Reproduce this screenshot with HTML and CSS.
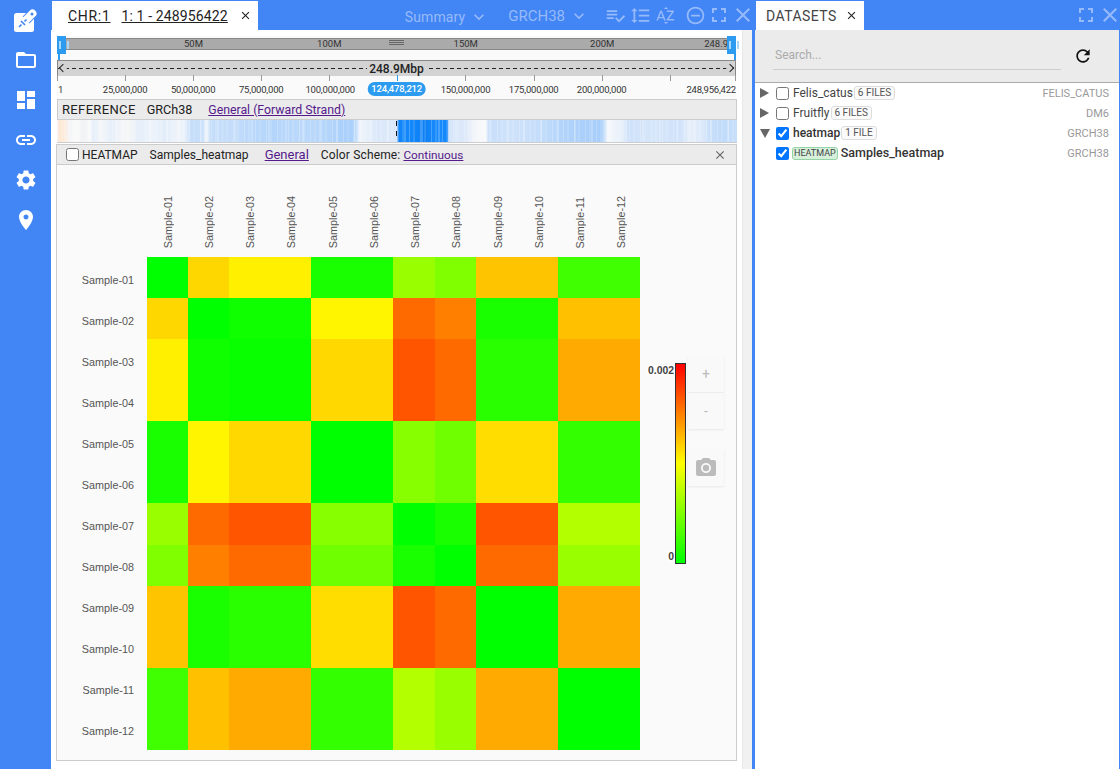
FILE: index.html
```html
<!DOCTYPE html>
<html>
<head>
    <title>Genome Browser</title>
    <link rel="stylesheet" href="styles.css">
</head>
<body>
    <svg class="sprite" xmlns="http://www.w3.org/2000/svg">
        <symbol id="i-folder" viewBox="0 0 24 24"><path d="M20 6h-8l-2-2H4c-1.1 0-2 .9-2 2v12c0 1.1.9 2 2 2h16c1.1 0 2-.9 2-2V8c0-1.1-.9-2-2-2zm0 12H4V8h16v10z"/></symbol>
        <symbol id="i-dashboard" viewBox="0 0 24 24"><path d="M3 13h8V3H3v10zm0 8h8v-6H3v6zm10 0h8V11h-8v10zm0-18v6h8V3h-8z"/></symbol>
        <symbol id="i-link" viewBox="0 0 24 24"><path d="M3.9 12c0-1.71 1.39-3.1 3.1-3.1h4V7H7c-2.76 0-5 2.24-5 5s2.24 5 5 5h4v-1.9H7c-1.71 0-3.1-1.39-3.1-3.1zM8 13h8v-2H8v2zm9-6h-4v1.9h4c1.71 0 3.1 1.39 3.1 3.1s-1.39 3.1-3.1 3.1h-4V17h4c2.76 0 5-2.24 5-5s-2.24-5-5-5z"/></symbol>
        <symbol id="i-gear" viewBox="0 0 24 24"><path d="M19.14 12.94c.04-.3.06-.61.06-.94 0-.32-.02-.64-.07-.94l2.03-1.58c.18-.14.23-.41.12-.61l-1.92-3.32c-.12-.22-.37-.29-.59-.22l-2.39.96c-.5-.38-1.03-.7-1.62-.94l-.36-2.54c-.04-.24-.24-.41-.48-.41h-3.84c-.24 0-.43.17-.47.41l-.36 2.54c-.59.24-1.13.57-1.62.94l-2.39-.96c-.22-.08-.47 0-.59.22L2.74 8.87c-.12.21-.08.47.12.61l2.03 1.58c-.05.3-.09.63-.09.94s.02.64.07.94l-2.03 1.58c-.18.14-.23.41-.12.61l1.92 3.32c.12.22.37.29.59.22l2.39-.96c.5.38 1.03.7 1.62.94l.36 2.54c.05.24.24.41.48.41h3.84c.24 0 .44-.17.47-.41l.36-2.54c.59-.24 1.13-.56 1.62-.94l2.39.96c.22.08.47 0 .59-.22l1.92-3.32c.12-.22.07-.47-.12-.61l-2.01-1.58zM12 15.6c-1.98 0-3.6-1.62-3.6-3.6s1.62-3.6 3.6-3.6 3.6 1.62 3.6 3.6-1.62 3.6-3.6 3.6z"/></symbol>
        <symbol id="i-pin" viewBox="0 0 24 24"><path d="M12 2C8.13 2 5 5.13 5 9c0 5.25 7 13 7 13s7-7.75 7-13c0-3.87-3.13-7-7-7zm0 9.5c-1.38 0-2.5-1.12-2.5-2.5s1.12-2.5 2.5-2.5 2.5 1.12 2.5 2.5-1.12 2.5-2.5 2.5z"/></symbol>
        <symbol id="i-chevron" viewBox="0 0 24 24"><path d="M7.41 8.59L12 13.17l4.59-4.58L18 10l-6 6-6-6 1.41-1.41z"/></symbol>
        <symbol id="i-checklist" viewBox="0 0 24 24"><path d="M14 10H2v2h12v-2zm0-4H2v2h12V6zM2 16h8v-2H2v2zm19.5-4.5L23 13l-6.99 7-4.51-4.5L13 14l3.01 3 5.49-5.5z"/></symbol>
        <symbol id="i-spacing" viewBox="0 0 24 24"><path d="M6 7h2.5L5 3.5 1.5 7H4v10H1.5L5 20.5 8.5 17H6V7zm4-2v2h12V5H10zm0 14h12v-2H10v2zm0-6h12v-2H10v2z"/></symbol>
        <symbol id="i-alpha" viewBox="0 0 24 24"><path d="M14.94 4.66h-4.72l2.36-2.36zm-4.69 14.71h4.66l-2.33 2.33zM6.1 6.27L1.6 17.73h1.84l.92-2.45h5.11l.92 2.45h1.84L7.74 6.27H6.1zm-1.13 7.37l1.94-5.18 1.94 5.18H4.97zm10.76 2.5h6.12v1.59h-8.53v-1.29l5.92-8.56h-5.88v-1.6h8.3v1.26l-5.93 8.6z"/></symbol>
        <symbol id="i-minus" viewBox="0 0 24 24"><path d="M7 11v2h10v-2H7zm5-9C6.48 2 2 6.48 2 12s4.48 10 10 10 10-4.48 10-10S17.52 2 12 2zm0 18c-4.41 0-8-3.59-8-8s3.59-8 8-8 8 3.59 8 8-3.59 8-8 8z"/></symbol>
        <symbol id="i-full" viewBox="0 0 24 24"><path d="M7 14H5v5h5v-2H7v-3zm-2-4h2V7h3V5H5v5zm12 7h-3v2h5v-5h-2v3zM14 5v2h3v3h2V5h-5z"/></symbol>
        <symbol id="i-close" viewBox="0 0 24 24"><path d="M19 6.41L17.59 5 12 10.59 6.41 5 5 6.41 10.59 12 5 17.59 6.41 19 12 13.41 17.59 19 19 17.59 13.41 12z"/></symbol>
        <symbol id="i-refresh" viewBox="0 0 24 24"><path d="M17.65 6.35C16.2 4.9 14.21 4 12 4c-4.42 0-7.99 3.58-7.99 8s3.57 8 7.99 8c3.73 0 6.84-2.55 7.73-6h-2.08c-.82 2.33-3.04 4-5.65 4-3.31 0-6-2.69-6-6s2.69-6 6-6c1.66 0 3.14.69 4.22 1.78L13 11h7V4l-2.35 2.35z"/></symbol>
        <symbol id="i-camera" viewBox="0 0 24 24"><circle cx="12" cy="12" r="3.2"/><path d="M9 2L7.17 4H4c-1.1 0-2 .9-2 2v12c0 1.1.9 2 2 2h16c1.1 0 2-.9 2-2V6c0-1.1-.9-2-2-2h-3.17L15 2H9zm3 15c-2.76 0-5-2.24-5-5s2.24-5 5-5 5 2.24 5 5-2.24 5-5 5z"/></symbol>
    </svg>

    <nav class="sidebar">
        <svg class="logo" viewBox="0 0 24 24">
            <rect x="0" y="5" width="20" height="19" rx="2.5" fill="#fff"/>
            <path d="M12 12L18 6" stroke="#4285f4" stroke-width="9.6"/>
            <path d="M11 13L18.5 5.5" stroke="#fff" stroke-width="8" stroke-linecap="round"/>
            <path d="M5 19l2.5-2.5M7 13l4 4M10.5 13.5l2-2" stroke="#4285f4" stroke-width="1.7" fill="none"/>
            <circle cx="18" cy="6" r="1.5" fill="#4285f4"/>
        </svg>
        <svg class="nav-icon"><use href="#i-folder"/></svg>
        <svg class="nav-icon"><use href="#i-dashboard"/></svg>
        <svg class="nav-icon"><use href="#i-link"/></svg>
        <svg class="nav-icon"><use href="#i-gear"/></svg>
        <svg class="nav-icon"><use href="#i-pin"/></svg>
    </nav>

    <section class="main-panel">
        <header class="tabbar">
            <div class="tab tab-view">
                <span class="tab-chr">CHR:1</span>
                <span class="tab-range">1: 1 - 248956422</span>
                <svg class="tab-close"><use href="#i-close"/></svg>
            </div>
            <div class="tools">
                <span class="tool-select tool-summary">Summary <svg class="chevron"><use href="#i-chevron"/></svg></span>
                <span class="tool-select tool-genome">GRCH38 <svg class="chevron"><use href="#i-chevron"/></svg></span>
                <svg class="tool-icon"><use href="#i-checklist"/></svg>
                <svg class="tool-icon"><use href="#i-spacing"/></svg>
                <svg class="tool-icon"><use href="#i-alpha"/></svg>
                <svg class="tool-icon tool-minus"><use href="#i-minus"/></svg>
                <svg class="tool-icon tool-full"><use href="#i-full"/></svg>
                <svg class="tool-icon tool-x"><use href="#i-close"/></svg>
            </div>
        </header>
        <div class="main-body">
            <div class="view">
                <div class="ruler">
                    <div class="overview">
                        <span class="ov-label" style="left:20.1%">50M</span>
                        <span class="ov-label" style="left:40.1%">100M</span>
                        <span class="ov-label" style="left:60.2%">150M</span>
                        <span class="ov-label" style="left:80.3%">200M</span>
                        <span class="ov-end">248.9</span>
                        <span class="grip"></span>
                    </div>
                    <span class="handle handle-left"></span>
                    <span class="handle handle-right"></span>
                    <div class="span-bar">
                        <span class="span-arrow span-arrow-left"></span>
                        <span class="span-text">248.9Mbp</span>
                        <span class="span-arrow span-arrow-right"></span>
                    </div>
                    <div class="ticks">
                        <span class="tick" style="left:0"></span>
                        <span class="tick" style="left:10.04%"></span>
                        <span class="tick" style="left:20.08%"></span>
                        <span class="tick" style="left:30.12%"></span>
                        <span class="tick" style="left:40.16%"></span>
                        <span class="tick tick-pin" style="left:50.1%"></span>
                        <span class="tick" style="left:60.25%"></span>
                        <span class="tick" style="left:70.3%"></span>
                        <span class="tick" style="left:80.33%"></span>
                        <span class="tick" style="left:90.37%"></span>
                        <span class="tick" style="left:100%"></span>
                        <span class="tick-first">1</span>
                        <span class="tick-label" style="left:10.04%">25,000,000</span>
                        <span class="tick-label" style="left:20.08%">50,000,000</span>
                        <span class="tick-label" style="left:30.12%">75,000,000</span>
                        <span class="tick-label" style="left:40.3%">100,000,000</span>
                        <span class="tick-label" style="left:60.25%">150,000,000</span>
                        <span class="tick-label" style="left:70.3%">175,000,000</span>
                        <span class="tick-label" style="left:80.33%">200,000,000</span>
                        <span class="tick-last">248,956,422</span>
                        <span class="pin-label">124,478,212</span>
                    </div>
                </div>

                <div class="track-head ref-head">
                    <span class="track-type">REFERENCE</span>
                    <span class="track-name">GRCh38</span>
                    <a class="track-link" href="#">General (Forward Strand)</a>
                </div>
                <div class="ref-track"><span class="ref-cursor"></span></div>

                <div class="heat-card">
                    <div class="track-head heat-head">
                        <input type="checkbox" class="heat-check">
                        <span class="heat-type">HEATMAP</span>
                        <span class="track-name">Samples_heatmap</span>
                        <a class="track-link heat-general" href="#">General</a>
                        <span class="scheme"><span class="scheme-label">Color Scheme:</span> <a class="track-link" href="#">Continuous</a></span>
                        <svg class="heat-close"><use href="#i-close"/></svg>
                    </div>
                    <div class="heat-plot">
                        <div class="col-labels">
                            <span>Sample-01</span><span>Sample-02</span><span>Sample-03</span><span>Sample-04</span>
                            <span>Sample-05</span><span>Sample-06</span><span>Sample-07</span><span>Sample-08</span>
                            <span>Sample-09</span><span>Sample-10</span><span>Sample-11</span><span>Sample-12</span>
                        </div>
                        <div class="row-labels">
                            <span>Sample-01</span><span>Sample-02</span><span>Sample-03</span><span>Sample-04</span>
                            <span>Sample-05</span><span>Sample-06</span><span>Sample-07</span><span>Sample-08</span>
                            <span>Sample-09</span><span>Sample-10</span><span>Sample-11</span><span>Sample-12</span>
                        </div>
                        <div class="matrix" id="matrix"></div>
                        <div class="legend">
                            <div class="color-bar">
                                <span class="bar-max">0.002</span>
                                <span class="bar-min">0</span>
                            </div>
                            <div class="heat-buttons">
                                <button class="heat-btn">+</button>
                                <button class="heat-btn">-</button>
                                <button class="heat-btn heat-camera"><svg><use href="#i-camera"/></svg></button>
                            </div>
                        </div>
                    </div>
                </div>
            </div>
            <div class="scrollbar"></div>
        </div>
    </section>

    <aside class="side-panel">
        <header class="tabbar">
            <div class="tab tab-side">
                <span class="tab-title">DATASETS</span>
                <svg class="tab-close"><use href="#i-close"/></svg>
            </div>
            <div class="tools">
                <svg class="tool-icon tool-full"><use href="#i-full"/></svg>
                <svg class="tool-icon tool-x"><use href="#i-close"/></svg>
            </div>
        </header>
        <div class="side-search">
            <input type="text" class="search-input" placeholder="Search...">
            <svg class="refresh"><use href="#i-refresh"/></svg>
        </div>
        <ul class="tree">
            <li class="tree-row">
                <span class="arrow"></span>
                <input type="checkbox">
                <span class="tree-name">Felis_catus</span>
                <span class="badge">6 FILES</span>
                <span class="genome">FELIS_CATUS</span>
            </li>
            <li class="tree-row">
                <span class="arrow"></span>
                <input type="checkbox">
                <span class="tree-name">Fruitfly</span>
                <span class="badge">6 FILES</span>
                <span class="genome">DM6</span>
            </li>
            <li class="tree-row">
                <span class="arrow arrow-open"></span>
                <input type="checkbox" checked>
                <span class="tree-name tree-active">heatmap</span>
                <span class="badge">1 FILE</span>
                <span class="genome">GRCH38</span>
            </li>
            <li class="tree-row tree-child">
                <input type="checkbox" checked>
                <span class="badge-heat">HEATMAP</span>
                <span class="tree-name tree-active tree-file">Samples_heatmap</span>
                <span class="genome">GRCH38</span>
            </li>
        </ul>
    </aside>

    <script src="heatmap.js"></script>
</body>
</html>
```

FILE: styles.css
```css
* {
    box-sizing: border-box;
}
html, body {
    height: 100%;
}
body {
    margin: 0;
    display: flex;
    overflow: hidden;
    background-color: #4285f4;
    font-family: Roboto, "Liberation Sans", sans-serif;
    font-size: 12px;
    color: #222;
}
.sprite {
    display: none;
}

/* left nav */
.sidebar {
    width: 51px;
    flex: none;
    display: flex;
    flex-direction: column;
    align-items: center;
    padding-top: 8px;
}
.logo {
    width: 24px;
    height: 24px;
    margin-bottom: 16px;
}
.nav-icon {
    width: 24px;
    height: 24px;
    margin-bottom: 16px;
    fill: #fff;
}

/* tabs */
.main-panel {
    width: 701px;
    flex: none;
    display: flex;
    flex-direction: column;
}
.tabbar {
    height: 30px;
    flex: none;
    display: flex;
    justify-content: space-between;
}
.tab {
    margin: 1px 0 0 1px;
    background-color: #fff;
    display: flex;
    align-items: center;
    font-size: 14px;
}
.tab-view {
    width: 206px;
    padding-left: 16px;
}
.tab-chr, .tab-range {
    text-decoration: underline;
}
.tab-chr {
    margin-right: 11px;
    letter-spacing: 0.7px;
}
.tab-range {
    letter-spacing: 0.13px;
}
.tab-close {
    width: 13px;
    height: 13px;
    margin-left: 11px;
    fill: #222;
}
.tab-side {
    width: 108px;
    padding-left: 10px;
    color: #444;
}
.tab-title {
    letter-spacing: 0.45px;
}
.tab-side .tab-close {
    margin-left: 8px;
}
.tools {
    display: flex;
    align-items: center;
    color: #97bafa;
    font-size: 14px;
    margin-right: -3px;
}
.tool-select {
    display: flex;
    align-items: center;
    padding-top: 3px;
}
.tool-summary {
    letter-spacing: 0.1px;
    margin-right: 19px;
}
.tool-genome {
    font-size: 15px;
    padding-top: 1px;
    margin-right: 12px;
}
.chevron {
    width: 20px;
    height: 20px;
    margin-left: 4px;
    fill: #97bafa;
}
.tool-icon {
    width: 21px;
    height: 21px;
    margin-left: 4px;
    fill: #97bafa;
}
.tool-minus {
    margin-left: 9px;
}
.tool-full {
    width: 24px;
    height: 24px;
    margin-left: 1px;
}
.tool-x {
    width: 24px;
    height: 24px;
    margin-left: 0;
}

/* main body */
.main-body {
    flex: 1;
    display: flex;
    background-color: #fff;
    overflow: hidden;
}
.view {
    width: 691px;
    flex: none;
    padding: 6px 5px 0 5px;
}
.scrollbar {
    width: 10px;
    flex: none;
    background-color: #f1f1f1;
    border-left: 1px solid #e8e8e8;
}

/* ruler */
.ruler {
    height: 63px;
    position: relative;
    background-color: #fafafa;
    margin: 0 1px 0 1px;
}
.overview {
    position: absolute;
    left: 0;
    right: 0;
    top: 2px;
    height: 12px;
    background-color: #aaa;
    border-top: 1px solid #888;
    border-bottom: 1px solid #888;
    font-size: 9.5px;
    line-height: 10px;
    color: #333;
    overflow: hidden;
}
.ov-label {
    position: absolute;
    transform: translateX(-50%);
}
.ov-end {
    position: absolute;
    right: 8px;
}
.grip {
    position: absolute;
    left: 332px;
    top: 1px;
    width: 15px;
    height: 6px;
    background: repeating-linear-gradient(#666 0 1px, transparent 1px 2px);
}
.handle {
    position: absolute;
    top: 0;
    width: 9px;
    height: 18px;
    background-color: #2d9cf0;
}
.handle::after {
    content: "";
    position: absolute;
    left: 2px;
    top: 5px;
    width: 6px;
    height: 8px;
    border-left: 2px solid #a9d7fa;
    border-right: 2px solid #a9d7fa;
}
.handle::before {
    content: "";
    position: absolute;
    top: 18px;
    width: 2px;
    height: 6px;
    background-color: #2d9cf0;
}
.handle-left {
    left: 0;
}
.handle-left::before {
    left: 1px;
}
.handle-right {
    right: 0;
}
.handle-right::before {
    right: 0;
}
.span-bar {
    position: absolute;
    left: 0;
    right: 0;
    top: 24px;
    height: 16px;
    background-color: #d3d3d3;
    border-top: 1px solid #888;
    border-left: 1px solid #888;
    border-right: 1px solid #888;
    display: flex;
    align-items: center;
    justify-content: center;
    background-image: repeating-linear-gradient(90deg, #222 0 4px, transparent 4px 7px);
    background-size: 100% 1px;
    background-position: 0 7px;
    background-repeat: no-repeat;
}
.span-text {
    background-color: #d3d3d3;
    padding: 0 2px;
    font-size: 12px;
    font-weight: 500;
    color: #222;
}
.span-arrow {
    position: absolute;
    top: 4px;
    width: 6px;
    height: 6px;
    border-left: 1px solid #222;
    border-bottom: 1px solid #222;
    background-color: #d3d3d3;
}
.span-arrow-left {
    left: 2px;
    transform: rotate(45deg);
}
.span-arrow-right {
    right: 2px;
    transform: rotate(225deg);
}
.ticks {
    position: absolute;
    left: 0;
    right: 1px;
    top: 39px;
    height: 24px;
    font-size: 9.5px;
    letter-spacing: -0.2px;
    color: #333;
}
.tick {
    position: absolute;
    top: 0;
    width: 1px;
    height: 6px;
    background-color: #999;
}
.tick-pin {
    background-color: #2d9cf0;
}
.tick-label {
    position: absolute;
    top: 9px;
    transform: translateX(-50%);
}
.tick-first {
    position: absolute;
    left: 1px;
    top: 9px;
}
.tick-last {
    position: absolute;
    right: -1px;
    top: 9px;
}
.pin-label {
    position: absolute;
    left: 50.1%;
    top: 7px;
    transform: translateX(-50%);
    height: 14px;
    line-height: 14px;
    padding: 0 4px;
    border-radius: 7px;
    background-color: #2d9cf0;
    color: #fff;
    font-weight: 500;
}

/* track headers */
.track-head {
    height: 21px;
    display: flex;
    align-items: center;
    background-color: #ebebeb;
    border: 1px solid #ccc;
    padding-left: 5px;
    margin: 0 0 0 1px;
    font-size: 12px;
    white-space: nowrap;
}
.ref-head {
    font-size: 13px;
    padding-left: 4px;
}
.ref-head .track-type {
    letter-spacing: 0.35px;
}
.ref-head .track-name {
    font-size: 12.6px;
}
.ref-head .track-link {
    font-size: 12.3px;
}
.track-type {
    margin-right: 11px;
}
.track-name {
    margin-right: 16px;
    color: #222;
}
.track-link {
    color: #551a8b;
    text-decoration: underline;
}
.ref-track {
    height: 23px;
    position: relative;
    margin: 0 0 0 1px;
    border-bottom: 1px solid #ccc;
    background: linear-gradient(90deg,
        #f0f5fb 0, #fde7d3 0.3%, #fdebdc 1.2%, #f4f5f7 1.8%, #fafafa 3%, #eef0f3 3.8%, #fafafa 4.8%,
        #e4eefa 5.4%, #f4f6f9 6.5%, #e6effa 8%, #f3f5f8 9.5%, #f6f6f6 10.5%, #e4eefa 12%, #edf3fb 14%,
        #e2edfa 16%, #f2f5fa 18%, #e2edfa 19%, #c4ddfa 19.8%, #c8e0fa 21.4%, #f2f6fb 22%, #c6defa 22.6%,
        #c4ddfa 26%, #bcd9fb 28%, #b4d5fb 32%, #bcd9fb 36%, #b4d5fb 40%, #aad0fb 42%, #aad0fb 43.6%, #f2f6fb 44.6%,
        #e8f0fa 45.4%, #dce9fa 47%, #dce9fa 50%, #0f84f8 50.2%, #1288fb 52%, #0c80f4 54%, #1a8cff 56%, #1288fb 57.4%,
        #d5e5fa 57.6%, #dde9fa 60%, #f4f6f9 61.6%, #f8f9fb 63%, #c8dffa 63.5%, #cfe2fa 67%, #c4ddfa 71%,
        #b4d5fb 74%, #abd0fb 77%, #a8cefb 80%, #f4f7fb 81%, #e8f0fa 83%, #cfe2fa 84%, #d6e6fa 88%, #cfe2fa 91.5%,
        #e6effa 93%, #dce9fa 95%, #c8dffa 96%, #c0dbfa 98%, #c8dffa 100%);
}
/* fine banding of the gene density track */
.ref-track::after {
    content: "";
    position: absolute;
    inset: 0;
    background:
        repeating-linear-gradient(90deg, rgba(255,255,255,0.22) 0 1px, transparent 1px 4px, rgba(255,255,255,0.12) 4px 6px, transparent 6px 11px),
        repeating-linear-gradient(90deg, transparent 0 7px, rgba(255,255,255,0.2) 7px 9px, transparent 9px 17px);
}
.ref-cursor {
    position: absolute;
    z-index: 1;
    left: 339px;
    top: 1px;
    width: 1px;
    height: 19px;
    background: repeating-linear-gradient(#111 0 5px, transparent 5px 10px);
}

/* heatmap card */
.heat-card {
    height: 617px;
    margin-top: 1px;
    background-color: #fafafa;
    border: 1px solid #ccc;
    border-top: none;
}
.heat-head {
    border-width: 1px 0 1px 0;
    margin: 0;
    padding-left: 9px;
    position: relative;
}
.heat-check {
    margin: 0 3px 0 0;
}
.heat-type {
    margin-right: 12px;
}
.heat-general {
    font-size: 13px;
}
.heat-close {
    position: absolute;
    right: 9px;
    top: 3px;
    width: 14px;
    height: 14px;
    fill: #666;
}
.scheme {
    margin-left: 12px;
}
.scheme-label {
    letter-spacing: 0.15px;
}
.scheme .track-link {
    font-size: 11.8px;
}
.heat-plot {
    display: grid;
    grid-template-columns: 90px 493px auto;
    grid-template-rows: 92px 493px;
}
.col-labels {
    grid-column: 2;
    margin-right: -2px;
    display: grid;
    grid-template-columns: repeat(12, 1fr);
    padding-bottom: 9px;
}
.col-labels span {
    justify-self: center;
    align-self: end;
    writing-mode: vertical-rl;
    transform: rotate(180deg);
    font-family: "Liberation Sans", Arial, sans-serif;
    font-size: 10.8px;
    color: #555;
}
.row-labels {
    grid-column: 1;
    grid-row: 2;
    display: grid;
    grid-template-rows: repeat(12, 1fr);
    padding-right: 13px;
}
.row-labels span {
    justify-self: end;
    align-self: center;
    transform: translateY(1.5px);
    font-family: "Liberation Sans", Arial, sans-serif;
    font-size: 10.8px;
    color: #555;
}
.matrix {
    grid-column: 2;
    grid-row: 2;
    display: grid;
    grid-template-columns: repeat(12, 1fr);
    grid-template-rows: repeat(12, 1fr);
}
.legend {
    grid-column: 3;
    grid-row: 2;
    display: flex;
    align-items: flex-start;
    margin-left: 35px;
}
.color-bar {
    position: relative;
    width: 11px;
    height: 201px;
    margin-top: 106px;
    border: 1px solid #333;
    background: linear-gradient(#ff0000, #ffff00 50%, #00ff00);
}
.bar-max, .bar-min {
    position: absolute;
    right: 11px;
    padding-left: 1px;
    background-color: #fdfdfd;
    font-family: "Liberation Sans", Arial, sans-serif;
    font-size: 10.4px;
    font-weight: bold;
    color: #444;
}
.bar-max {
    top: 1px;
}
.bar-min {
    bottom: 1px;
}
.heat-buttons {
    display: flex;
    flex-direction: column;
    margin: 99px 0 0 2px;
    gap: 1px;
}
.heat-btn {
    width: 36px;
    height: 36px;
    padding: 0;
    border: none;
    background-color: #f9f9f9;
    box-shadow: 0 1px 2px rgba(0, 0, 0, 0.08);
    font-size: 14px;
    color: #bbb;
    font-family: Roboto, sans-serif;
}
.heat-camera {
    margin-top: 19px;
    height: 37px;
}
.heat-camera svg {
    display: block;
    width: 24px;
    height: 24px;
    margin: auto;
    fill: #bbb;
}

/* datasets panel */
.side-panel {
    width: 364px;
    margin-left: 3px;
    flex: none;
    display: flex;
    flex-direction: column;
    margin-right: 1px;
}
.side-search {
    height: 53px;
    flex: none;
    background-color: #ebebeb;
    border-bottom: 1px solid #aaa;
    display: flex;
    padding: 10px 0 0 18px;
}
.search-input {
    width: 288px;
    height: 30px;
    padding: 0 2px;
    border: none;
    border-bottom: 1px solid #ccc;
    background: transparent;
    font-family: Roboto, sans-serif;
    font-size: 12px;
}
.search-input::placeholder {
    color: #aaa;
}
.refresh {
    width: 20px;
    height: 20px;
    margin: 6px 0 0 12px;
    fill: #111;
}
.tree {
    flex: 1;
    margin: 0;
    padding: 0;
    list-style: none;
    background-color: #fff;
}
.tree-row {
    height: 20px;
    display: flex;
    align-items: center;
    padding: 0 10px 0 5px;
    color: #444;
}
.tree-row input {
    margin: 0 4px 0 7px;
}
.arrow {
    width: 9px;
    height: 10px;
    flex: none;
    border-left: 9px solid #666;
    border-top: 5px solid transparent;
    border-bottom: 5px solid transparent;
}
.arrow-open {
    width: 10px;
    height: 9px;
    border-top: 9px solid #666;
    border-left: 5px solid transparent;
    border-right: 5px solid transparent;
    border-bottom: none;
    margin-right: -1px;
}
.tree-child {
    padding-left: 14px;
}
.tree-child input {
    margin-right: 3px;
}
.tree-active {
    font-weight: 500;
    color: #333;
}
.tree-file {
    font-size: 12.5px;
    margin-bottom: 2px;
}
.badge {
    margin-left: 1px;
    height: 14px;
    line-height: 12px;
    padding: 0 3px;
    border: 1px solid #ddd;
    border-radius: 3px;
    background-color: #fafafa;
    font-size: 10px;
    color: #555;
}
.badge-heat {
    height: 13px;
    line-height: 11px;
    padding: 0 1px;
    margin-right: 3px;
    border: 1px solid #95d5a5;
    border-radius: 3px;
    background-color: #d7f0dc;
    font-size: 9px;
    color: #444;
}
.genome {
    margin-left: auto;
    font-size: 11px;
    color: #999;
}
```

FILE: heatmap.js
```js
// sample distance matrix, cell colours by value (green - yellow - red)
var g0 = "#00ff00";
var rows = [
    [g0, "#ffd700", "#fff000", "#fff000", "#1aff00", "#1aff00", "#99ff00", "#80ff00", "#ffc400", "#ffc400", "#40ff00", "#40ff00"],
    ["#ffd700", g0, "#10ff00", "#10ff00", "#fff500", "#fff500", "#ff6a00", "#ff8000", "#1aff00", "#1aff00", "#ffc000", "#ffc000"],
    ["#fff000", "#10ff00", "#08ff00", "#08ff00", "#ffd800", "#ffd800", "#ff5500", "#ff6a00", "#2aff00", "#2aff00", "#ffaa00", "#ffaa00"],
    ["#fff000", "#10ff00", "#08ff00", "#08ff00", "#ffd800", "#ffd800", "#ff5500", "#ff6a00", "#2aff00", "#2aff00", "#ffaa00", "#ffaa00"],
    ["#1aff00", "#fff500", "#ffd800", "#ffd800", g0, g0, "#88ff00", "#70ff00", "#ffdd00", "#ffdd00", "#33ff00", "#33ff00"],
    ["#1aff00", "#fff500", "#ffd800", "#ffd800", g0, g0, "#88ff00", "#70ff00", "#ffdd00", "#ffdd00", "#33ff00", "#33ff00"],
    ["#99ff00", "#ff6a00", "#ff5500", "#ff5500", "#88ff00", "#88ff00", g0, "#1aff00", "#ff5500", "#ff5500", "#b3ff00", "#b3ff00"],
    ["#80ff00", "#ff8000", "#ff6a00", "#ff6a00", "#70ff00", "#70ff00", "#1aff00", g0, "#ff6a00", "#ff6a00", "#99ff00", "#99ff00"],
    ["#ffc400", "#1aff00", "#2aff00", "#2aff00", "#ffdd00", "#ffdd00", "#ff5500", "#ff6a00", g0, g0, "#ffaa00", "#ffaa00"],
    ["#ffc400", "#1aff00", "#2aff00", "#2aff00", "#ffdd00", "#ffdd00", "#ff5500", "#ff6a00", g0, g0, "#ffaa00", "#ffaa00"],
    ["#40ff00", "#ffc000", "#ffaa00", "#ffaa00", "#33ff00", "#33ff00", "#b3ff00", "#99ff00", "#ffaa00", "#ffaa00", g0, g0],
    ["#40ff00", "#ffc000", "#ffaa00", "#ffaa00", "#33ff00", "#33ff00", "#b3ff00", "#99ff00", "#ffaa00", "#ffaa00", g0, g0]
];

var matrix = document.getElementById("matrix");
rows.forEach(function (row) {
    row.forEach(function (color) {
        var cell = document.createElement("div");
        cell.style.backgroundColor = color;
        matrix.appendChild(cell);
    });
});
```
